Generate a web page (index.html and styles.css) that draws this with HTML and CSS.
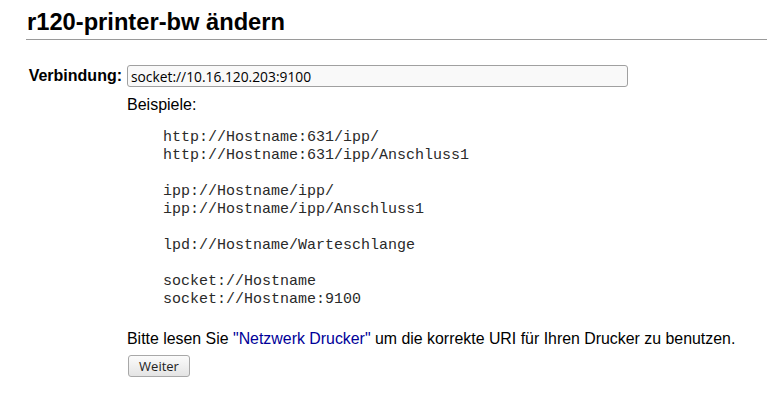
FILE: index.html
```html
<!DOCTYPE html>
<html lang="de">
<head>
<meta charset="utf-8">
<title>r120-printer-bw ändern</title>
<link rel="stylesheet" href="styles.css">
</head>
<body>
<h1 class="title">r120-printer-bw ändern</h1>
<form class="form">
  <label class="label" for="uri">Verbindung:</label>
  <div class="field">
    <input class="input" id="uri" type="text" value="socket://10.16.120.203:9100">
  </div>
  <div class="content">
    <p class="examples-title">Beispiele:</p>
<pre class="examples">http://Hostname:631/ipp/
http://Hostname:631/ipp/Anschluss1

ipp://Hostname/ipp/
ipp://Hostname/ipp/Anschluss1

lpd://Hostname/Warteschlange

socket://Hostname
socket://Hostname:9100</pre>
    <p class="note">Bitte lesen Sie <a class="link" href="#">"Netzwerk Drucker"</a> um die korrekte URI für Ihren Drucker zu benutzen.</p>
    <button class="button" type="button">Weiter</button>
  </div>
</form>
</body>
</html>
```

FILE: styles.css
```css
html, body {
  margin: 0;
  padding: 0;
  background: #ffffff;
  color: #000000;
  font-family: "Liberation Sans", Arial, sans-serif;
  font-size: 16px;
}

.title {
  margin: 9px 0 0 26px;
  padding: 0 0 3px 1px;
  font-size: 23.7px;
  font-weight: bold;
  line-height: 27px;
  border-bottom: 1px solid #9a9a9a;
}

.form {
  display: grid;
  grid-template-columns: 96px 1fr;
  column-gap: 5px;
  margin: 25px 0 0 26px;
  align-items: center;
}

.label {
  text-align: right;
  font-weight: bold;
  line-height: 18px;
}

.field {
  display: flex;
}

.input {
  box-sizing: border-box;
  width: 501px;
  height: 22px;
  margin: 0;
  padding: 0 3px;
  border: 1px solid #a0a0a0;
  border-radius: 3px;
  background: #f9f9f9;
  font-family: "Open Sans", "DejaVu Sans", sans-serif;
  font-size: 13.8px;
  color: #000;
}

.content {
  grid-column: 2;
}

.examples-title {
  margin: 9px 0 0 0;
  line-height: 18px;
}

.examples {
  margin: 15px 0 0 36px;
  font-family: "Liberation Mono", "Courier New", monospace;
  font-size: 15px;
  line-height: 18px;
  color: #2a2a2a;
}

.note {
  margin: 21px 0 0 0;
  font-size: 15.9px;
  line-height: 18px;
}

.link {
  color: #000099;
  text-decoration: none;
}

.button {
  display: block;
  margin: 7px 0 0 1px;
  box-sizing: border-box;
  width: 62px;
  height: 22px;
  padding: 0;
  border: 1px solid #a8a8a8;
  border-radius: 3px;
  background: linear-gradient(#fbfbfb, #e4e4e4);
  font-family: "Open Sans", "DejaVu Sans", sans-serif;
  font-size: 13px;
  color: #222;
}
```
